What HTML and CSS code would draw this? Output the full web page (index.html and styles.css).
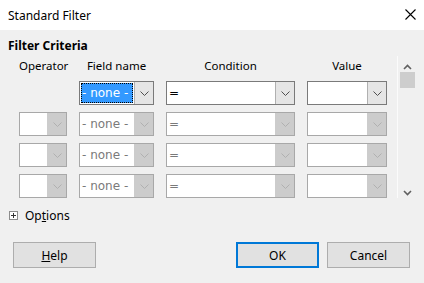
FILE: index.html
```html
<!DOCTYPE html>
<html lang="en">
<head>
  <meta charset="UTF-8">
  <title>Standard Filter</title>
  <link rel="stylesheet" href="styles.css">
</head>
<body>
  <div class="titlebar">
    <span class="title">Standard Filter</span>
    <svg class="close" width="11" height="11" viewBox="0 0 11 11">
      <path d="M0.5 0.5 L10.5 10.5 M10.5 0.5 L0.5 10.5" stroke="#000" stroke-width="1.1" fill="none"/>
    </svg>
  </div>

  <div class="content">
    <div class="section-title">Filter Criteria</div>

    <div class="criteria">
      <div class="grid">
        <div class="head">Operator</div>
        <div class="head">Field name</div>
        <div class="head">Condition</div>
        <div class="head">Value</div>

        <!-- Row 1 -->
        <div class="cell-empty"></div>
        <div class="combo">
          <div class="combo-text selected"><span>- none -</span></div>
          <div class="combo-btn"><svg width="9" height="5" viewBox="0 0 9 5"><polyline points="0.5,0.5 4.5,4.5 8.5,0.5" fill="none" stroke="#505050"/></svg></div>
        </div>
        <div class="combo">
          <div class="combo-text">=</div>
          <div class="combo-btn"><svg width="9" height="5" viewBox="0 0 9 5"><polyline points="0.5,0.5 4.5,4.5 8.5,0.5" fill="none" stroke="#505050"/></svg></div>
        </div>
        <div class="combo">
          <div class="combo-text"></div>
          <div class="combo-btn"><svg width="9" height="5" viewBox="0 0 9 5"><polyline points="0.5,0.5 4.5,4.5 8.5,0.5" fill="none" stroke="#505050"/></svg></div>
        </div>

        <!-- Rows 2-4 (disabled) -->
        <div class="combo off"><div class="combo-text"></div><div class="combo-btn"><svg width="9" height="5" viewBox="0 0 9 5"><polyline points="0.5,0.5 4.5,4.5 8.5,0.5" fill="none" stroke="#b0b0b0"/></svg></div></div>
        <div class="combo off"><div class="combo-text">- none -</div><div class="combo-btn"><svg width="9" height="5" viewBox="0 0 9 5"><polyline points="0.5,0.5 4.5,4.5 8.5,0.5" fill="none" stroke="#b0b0b0"/></svg></div></div>
        <div class="combo off"><div class="combo-text">=</div><div class="combo-btn"><svg width="9" height="5" viewBox="0 0 9 5"><polyline points="0.5,0.5 4.5,4.5 8.5,0.5" fill="none" stroke="#b0b0b0"/></svg></div></div>
        <div class="combo off"><div class="combo-text"></div><div class="combo-btn"><svg width="9" height="5" viewBox="0 0 9 5"><polyline points="0.5,0.5 4.5,4.5 8.5,0.5" fill="none" stroke="#b0b0b0"/></svg></div></div>

        <div class="combo off"><div class="combo-text"></div><div class="combo-btn"><svg width="9" height="5" viewBox="0 0 9 5"><polyline points="0.5,0.5 4.5,4.5 8.5,0.5" fill="none" stroke="#b0b0b0"/></svg></div></div>
        <div class="combo off"><div class="combo-text">- none -</div><div class="combo-btn"><svg width="9" height="5" viewBox="0 0 9 5"><polyline points="0.5,0.5 4.5,4.5 8.5,0.5" fill="none" stroke="#b0b0b0"/></svg></div></div>
        <div class="combo off"><div class="combo-text">=</div><div class="combo-btn"><svg width="9" height="5" viewBox="0 0 9 5"><polyline points="0.5,0.5 4.5,4.5 8.5,0.5" fill="none" stroke="#b0b0b0"/></svg></div></div>
        <div class="combo off"><div class="combo-text"></div><div class="combo-btn"><svg width="9" height="5" viewBox="0 0 9 5"><polyline points="0.5,0.5 4.5,4.5 8.5,0.5" fill="none" stroke="#b0b0b0"/></svg></div></div>

        <div class="combo off"><div class="combo-text"></div><div class="combo-btn"><svg width="9" height="5" viewBox="0 0 9 5"><polyline points="0.5,0.5 4.5,4.5 8.5,0.5" fill="none" stroke="#b0b0b0"/></svg></div></div>
        <div class="combo off"><div class="combo-text">- none -</div><div class="combo-btn"><svg width="9" height="5" viewBox="0 0 9 5"><polyline points="0.5,0.5 4.5,4.5 8.5,0.5" fill="none" stroke="#b0b0b0"/></svg></div></div>
        <div class="combo off"><div class="combo-text">=</div><div class="combo-btn"><svg width="9" height="5" viewBox="0 0 9 5"><polyline points="0.5,0.5 4.5,4.5 8.5,0.5" fill="none" stroke="#b0b0b0"/></svg></div></div>
        <div class="combo off"><div class="combo-text"></div><div class="combo-btn"><svg width="9" height="5" viewBox="0 0 9 5"><polyline points="0.5,0.5 4.5,4.5 8.5,0.5" fill="none" stroke="#b0b0b0"/></svg></div></div>
      </div>

      <div class="scrollbar">
        <svg class="arrow" width="9" height="6" viewBox="0 0 9 6"><polyline points="1,5 4.5,1.5 8,5" fill="none" stroke="#606060" stroke-width="1.6"/></svg>
        <div class="thumb"></div>
        <div class="track"></div>
        <svg class="arrow" width="9" height="6" viewBox="0 0 9 6"><polyline points="1,1 4.5,4.5 8,1" fill="none" stroke="#606060" stroke-width="1.6"/></svg>
      </div>
    </div>

    <div class="options">
      <svg class="expander" width="9" height="9" viewBox="0 0 9 9">
        <rect x="0.5" y="0.5" width="8" height="8" fill="#fff" stroke="#8c8c8c"/>
        <path d="M2 4.5 H7 M4.5 2 V7" stroke="#333" stroke-width="1"/>
      </svg>
      <span>Op<u>t</u>ions</span>
    </div>

    <div class="buttons">
      <button class="btn"><u>H</u>elp</button>
      <div class="spacer"></div>
      <button class="btn default">OK</button>
      <button class="btn">Cancel</button>
    </div>
  </div>
</body>
</html>
```

FILE: styles.css
```css
body {
  margin: 0;
  padding: 0;
  width: 424px;
  height: 283px;
  overflow: hidden;
  background: #f0f0f0;
  font-family: "Noto Sans", sans-serif;
  font-size: 11.5px;
  color: #000;
}

.titlebar {
  height: 30px;
  background: #fff;
  display: flex;
  align-items: center;
  justify-content: space-between;
  padding: 0 8px 0 8px;
}

.title {
  font-size: 12px;
}

.close {
  margin-top: -1px;
}

.content {
  padding: 7px 8px 0 8px;
}

.section-title {
  font-weight: bold;
  font-size: 12px;
  height: 17px;
  line-height: 17px;
}

.criteria {
  display: flex;
  margin-top: 2px;
}

.grid {
  display: grid;
  grid-template-columns: 48px 75px 129px 80px;
  grid-template-rows: 18px repeat(4, 24px);
  column-gap: 12px;
  row-gap: 7px;
  margin-left: 11px;
}

.head {
  text-align: center;
  line-height: 20px;
  font-size: 11.5px;
  white-space: nowrap;
}

.combo {
  display: flex;
  border: 1px solid #7a7a7a;
  background: #fff;
  box-sizing: border-box;
}

.combo-text {
  flex: 1;
  font-family: "DejaVu Sans", sans-serif;
  font-size: 12px;
  line-height: 22px;
  padding-left: 2px;
  white-space: nowrap;
  overflow: hidden;
}

.combo-text.selected {
  padding: 1px;
  line-height: 20px;
}

.combo-text.selected span {
  display: block;
  height: 20px;
  background: #3399ff;
  color: #fff;
  outline: 1px dotted #000;
  outline-offset: -1px;
  padding-left: 1px;
}

.combo-btn {
  width: 18px;
  background: #e5e5e5;
  border-left: 1px solid #b0b0b0;
  display: flex;
  align-items: center;
  justify-content: center;
}

.combo.off {
  border-color: #a8a8a8;
}

.combo.off .combo-text {
  color: #7a7a7a;
}

.combo.off .combo-btn {
  background: #cccccc;
  border-left-color: #cccccc;
}

.scrollbar {
  width: 21px;
  margin-left: 10px;
  border-left: 1px solid #fbfbfb;
  display: flex;
  flex-direction: column;
  align-items: center;
  padding-top: 8px;
  padding-bottom: 2px;
}

.scrollbar .arrow {
  flex: none;
}

.thumb {
  width: 15px;
  height: 16px;
  background: #cdcdcd;
  margin-top: 2px;
}

.track {
  flex: 1;
}

.options {
  display: flex;
  align-items: center;
  gap: 7px;
  margin-top: 9px;
  font-size: 12px;
  padding-left: 1px;
}

.buttons {
  display: flex;
  gap: 8px;
  margin-top: 18px;
  padding: 0 6px 0 5px;
}

.spacer {
  flex: 1;
}

.btn {
  width: 83px;
  height: 26px;
  background: #e1e1e1;
  border: 1px solid #adadad;
  font-family: "Noto Sans", sans-serif;
  font-size: 12px;
  color: #000;
  padding: 0;
}

.btn.default {
  border: 2px solid #0078d7;
}
```
